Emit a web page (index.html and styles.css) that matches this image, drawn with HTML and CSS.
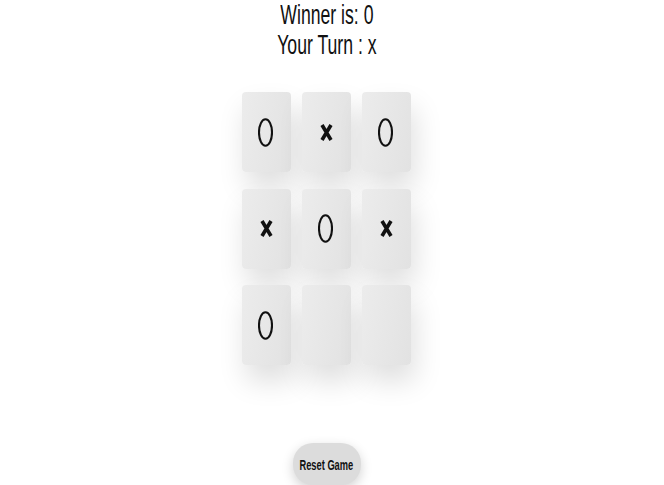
FILE: index.html
```html
<!DOCTYPE html>
<html>
<head>
<meta charset="utf-8">
<link rel="stylesheet" href="styles.css">
</head>
<body>
<div class="app">
  <div class="status"><span class="squeeze">Winner is: 0</span></div>
  <div class="status"><span class="squeeze">Your Turn : x</span></div>
  <div class="board">
    <div class="cell"><svg class="o" viewBox="0 0 15 29"><ellipse cx="7.5" cy="14.5" rx="6.5" ry="13.3"/></svg></div>
    <div class="cell"><svg class="x" viewBox="0 0 13 19"><path d="M2 2 L11 17 M11 2 L2 17"/></svg></div>
    <div class="cell"><svg class="o" viewBox="0 0 15 29"><ellipse cx="7.5" cy="14.5" rx="6.5" ry="13.3"/></svg></div>
    <div class="cell"><svg class="x" viewBox="0 0 13 19"><path d="M2 2 L11 17 M11 2 L2 17"/></svg></div>
    <div class="cell"><svg class="o" viewBox="0 0 15 29"><ellipse cx="7.5" cy="14.5" rx="6.5" ry="13.3"/></svg></div>
    <div class="cell"><svg class="x" viewBox="0 0 13 19"><path d="M2 2 L11 17 M11 2 L2 17"/></svg></div>
    <div class="cell"><svg class="o" viewBox="0 0 15 29"><ellipse cx="7.5" cy="14.5" rx="6.5" ry="13.3"/></svg></div>
    <div class="cell"></div>
    <div class="cell"></div>
  </div>
  <button class="reset"><span class="squeeze-btn">Reset Game</span></button>
</div>
</body>
</html>
```
FILE: styles.css
```css
html, body {
  margin: 0;
  padding: 0;
  background: #ffffff;
  overflow: hidden;
}
.app {
  width: 653px;
  height: 485px;
  display: flex;
  flex-direction: column;
  align-items: center;
  font-family: "Liberation Sans", Arial, sans-serif;
  color: #111;
}
.status {
  font-size: 28px;
  line-height: 30px;
  height: 30px;
  white-space: nowrap;
}
.squeeze {
  display: inline-block;
  transform: scaleX(0.63);
}
.squeeze-btn {
  display: inline-block;
  transform: scaleX(0.62);
}
.board {
  margin-top: 32px;
  display: grid;
  grid-template-columns: repeat(3, 49px);
  grid-template-rows: repeat(3, 80px);
  column-gap: 11px;
  row-gap: 16.5px;
}
.cell {
  border-radius: 4px;
  background: linear-gradient(100deg, #ececec 0%, #e6e6e6 60%, #e2e2e2 100%);
  box-shadow: 4px 16px 28px rgba(0, 0, 0, 0.13);
  display: flex;
  align-items: center;
  justify-content: center;
}
.o {
  width: 15px;
  height: 29px;
  fill: none;
  stroke: #111;
  stroke-width: 2.1;
  margin-left: -2px;
}
.x {
  width: 13px;
  height: 19px;
  fill: none;
  stroke: #111;
  stroke-width: 3.6;
}
.reset {
  margin-top: 78px;
  width: 68px;
  height: 42px;
  border: none;
  border-radius: 20px;
  background: #dcdcdc;
  box-shadow: 0 4px 12px rgba(0, 0, 0, 0.18);
  font-family: "Liberation Sans", Arial, sans-serif;
  font-weight: bold;
  font-size: 15px;
  color: #111;
  padding: 0;
  white-space: nowrap;
  display: flex;
  align-items: center;
  justify-content: center;
}
```
